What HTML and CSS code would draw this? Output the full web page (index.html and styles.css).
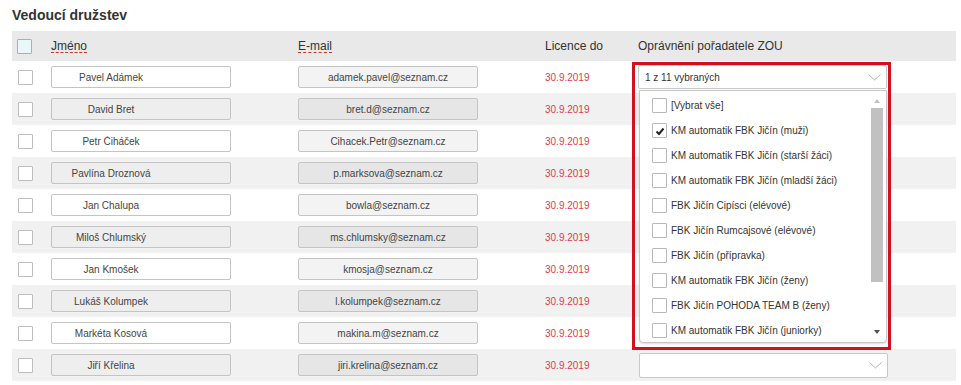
FILE: index.html
```html
<!DOCTYPE html>
<html lang="cs">
<head>
    <meta charset="UTF-8">
    <title>Vedoucí družstev</title>
    <link rel="stylesheet" href="styles.css">
</head>
<body>
    <h2 class="title">Vedoucí družstev</h2>

    <table class="leaders">
        <colgroup>
            <col class="c-check">
            <col class="c-name">
            <col class="c-mail">
            <col class="c-lic">
            <col class="c-zou">
        </colgroup>
        <thead>
            <tr>
                <th><span class="cb cb-head"></span></th>
                <th><abbr>Jméno</abbr></th>
                <th><abbr>E-mail</abbr></th>
                <th>Licence do</th>
                <th>Oprávnění pořadatele ZOU</th>
            </tr>
        </thead>
        <tbody>
            <tr>
                <td><span class="cb"></span></td>
                <td><input class="field field-name" value="Pavel Adámek" readonly></td>
                <td><input class="field field-mail" value="adamek.pavel@seznam.cz" readonly></td>
                <td class="lic">30.9.2019</td>
                <td>
                    <div class="zou-wrap">
                        <div class="ms-select">
                            <span>1 z 11 vybraných</span>
                            <svg class="chev" width="13" height="7" viewBox="0 0 13 7"><path d="M0.5 0.5 L6.5 6 L12.5 0.5" fill="none" stroke="#b5b5b5" stroke-width="1"/></svg>
                        </div>
                        <div class="ms-list">
                            <div class="ms-items">
                                <div class="ms-item"><span class="cb"></span>[Vybrat vše]</div>
                                <div class="ms-item"><span class="cb cb-on"><svg width="12" height="12" viewBox="0 0 12 12"><path d="M2.5 6.5 L5 9 L9.5 3.5" fill="none" stroke="#222" stroke-width="2"/></svg></span>KM automatik FBK Jičín (muži)</div>
                                <div class="ms-item"><span class="cb"></span>KM automatik FBK Jičín (starší žáci)</div>
                                <div class="ms-item"><span class="cb"></span>KM automatik FBK Jičín (mladší žáci)</div>
                                <div class="ms-item"><span class="cb"></span>FBK Jičín Cipísci (elévové)</div>
                                <div class="ms-item"><span class="cb"></span>FBK Jičín Rumcajsové (elévové)</div>
                                <div class="ms-item"><span class="cb"></span>FBK Jičín (přípravka)</div>
                                <div class="ms-item"><span class="cb"></span>KM automatik FBK Jičín (ženy)</div>
                                <div class="ms-item"><span class="cb"></span>FBK Jičín POHODA TEAM B (ženy)</div>
                                <div class="ms-item"><span class="cb"></span>KM automatik FBK Jičín (juniorky)</div>
                                <div class="ms-item"><span class="cb"></span>KM automatik FBK Jičín (dorostenci)</div>
                                <div class="ms-item"><span class="cb"></span>FBK Jičín B (muži)</div>
                            </div>
                            <div class="scrollbar">
                                <span class="sb-arrow sb-up"></span>
                                <span class="sb-thumb"></span>
                                <span class="sb-space"></span>
                                <span class="sb-arrow sb-down"></span>
                            </div>
                        </div>
                        <div class="highlight"></div>
                    </div>
                </td>
            </tr>
            <tr>
                <td><span class="cb"></span></td>
                <td><input class="field field-name" value="David Bret" readonly></td>
                <td><input class="field field-mail" value="bret.d@seznam.cz" readonly></td>
                <td class="lic">30.9.2019</td>
                <td></td>
            </tr>
            <tr>
                <td><span class="cb"></span></td>
                <td><input class="field field-name" value="Petr Čiháček" readonly></td>
                <td><input class="field field-mail" value="Cihacek.Petr@seznam.cz" readonly></td>
                <td class="lic">30.9.2019</td>
                <td></td>
            </tr>
            <tr>
                <td><span class="cb"></span></td>
                <td><input class="field field-name" value="Pavlína Droznová" readonly></td>
                <td><input class="field field-mail" value="p.marksova@seznam.cz" readonly></td>
                <td class="lic">30.9.2019</td>
                <td></td>
            </tr>
            <tr>
                <td><span class="cb"></span></td>
                <td><input class="field field-name" value="Jan Chalupa" readonly></td>
                <td><input class="field field-mail" value="bowla@seznam.cz" readonly></td>
                <td class="lic">30.9.2019</td>
                <td></td>
            </tr>
            <tr>
                <td><span class="cb"></span></td>
                <td><input class="field field-name" value="Miloš Chlumský" readonly></td>
                <td><input class="field field-mail" value="ms.chlumsky@seznam.cz" readonly></td>
                <td class="lic">30.9.2019</td>
                <td></td>
            </tr>
            <tr>
                <td><span class="cb"></span></td>
                <td><input class="field field-name" value="Jan Kmošek" readonly></td>
                <td><input class="field field-mail" value="kmosja@seznam.cz" readonly></td>
                <td class="lic">30.9.2019</td>
                <td></td>
            </tr>
            <tr>
                <td><span class="cb"></span></td>
                <td><input class="field field-name" value="Lukáš Kolumpek" readonly></td>
                <td><input class="field field-mail" value="l.kolumpek@seznam.cz" readonly></td>
                <td class="lic">30.9.2019</td>
                <td></td>
            </tr>
            <tr>
                <td><span class="cb"></span></td>
                <td><input class="field field-name" value="Markéta Kosová" readonly></td>
                <td><input class="field field-mail" value="makina.m@seznam.cz" readonly></td>
                <td class="lic">30.9.2019</td>
                <td></td>
            </tr>
            <tr>
                <td><span class="cb"></span></td>
                <td><input class="field field-name" value="Jiří Křelina" readonly></td>
                <td><input class="field field-mail" value="jiri.krelina@seznam.cz" readonly></td>
                <td class="lic">30.9.2019</td>
                <td>
                    <div class="ms-select ms-empty">
                        <span></span>
                        <svg class="chev" width="13" height="7" viewBox="0 0 13 7"><path d="M0.5 0.5 L6.5 6 L12.5 0.5" fill="none" stroke="#b5b5b5" stroke-width="1"/></svg>
                    </div>
                </td>
            </tr>
        </tbody>
    </table>
</body>
</html>
```

FILE: styles.css
```css
* {
    margin: 0;
    padding: 0;
    box-sizing: border-box;
}

body {
    font-family: 'Liberation Sans', Arial, sans-serif;
    color: #333;
    background: #fff;
    padding: 0 5px 0 12px;
}

.title {
    font-size: 14px;
    line-height: 17px;
    font-weight: bold;
    color: #333;
    margin: 7px 0 7px;
}

.leaders {
    width: 944px;
    border-collapse: collapse;
    table-layout: fixed;
}

.c-check { width: 33px; }
.c-name { width: 247px; }
.c-mail { width: 247px; }
.c-lic { width: 93px; }
.c-zou { width: 324px; }

th {
    background: #e9e9e9;
    height: 30px;
    font-size: 12px;
    font-weight: normal;
    text-align: left;
    padding: 0 6px;
    color: #333;
}

th abbr {
    display: inline-block;
    line-height: 12px;
    text-decoration: none;
    border-bottom: 1px dashed #c0392b;
}

td {
    height: 32px;
    padding: 0 6px;
    font-size: 10px;
    vertical-align: middle;
}

tbody tr:nth-child(even) {
    background: #f1f1f1;
}

.cb {
    display: inline-flex;
    align-items: center;
    justify-content: center;
    width: 15px;
    height: 15px;
    border: 1px solid #bdbdbd;
    border-radius: 1px;
    background: #fff;
    vertical-align: middle;
}

.cb-head {
    margin-left: -1px;
    background: #e9f7fa;
    border-color: #6ec6da;
}

.field {
    display: block;
    width: 180px;
    height: 22px;
    border: 1px solid #c4c4c4;
    border-radius: 2px;
    font-family: inherit;
    font-size: 10px;
    color: #444;
    text-align: center;
    outline: none;
}

.field-name {
    background: #fff;
    padding: 0 60px 0 0;
}

.field-mail {
    background: #f3f3f3;
    padding: 0;
}

tbody tr:nth-child(even) .field-name {
    background: #eeeeee;
}

tbody tr:nth-child(even) .field-mail {
    background: #e6e6e6;
}

.lic {
    color: #d9404a;
}

.zou-wrap {
    position: relative;
}

.ms-select {
    display: flex;
    align-items: center;
    justify-content: space-between;
    width: 249px;
    height: 24px;
    padding: 0 5px 0 6px;
    border: 1px solid #c8c8c8;
    border-radius: 2px;
    background: #fff;
    font-size: 10px;
    color: #333;
}

.ms-empty {
    height: 25px;
    margin-left: 1px;
}

.chev {
    display: block;
}

.ms-list {
    position: absolute;
    left: 1px;
    top: 25px;
    width: 248px;
    height: 253px;
    display: flex;
    background: #fff;
    border: 1px solid #c6c6c6;
    border-radius: 0 0 4px 4px;
    box-shadow: 0 1px 2px rgba(0,0,0,0.15);
    z-index: 2;
}

.ms-items {
    flex: 1;
    overflow: hidden;
    padding-top: 2px;
}

.ms-item {
    display: flex;
    align-items: center;
    height: 25px;
    padding-left: 12px;
    font-size: 10px;
    color: #333;
    white-space: nowrap;
}

.ms-item .cb {
    margin-right: 4px;
    border-color: #b8b8b8;
}

.cb-on {
    border-color: #9a9a9a;
}

.scrollbar {
    display: flex;
    flex-direction: column;
    align-items: center;
    width: 12px;
    margin-right: 3px;
    padding: 3px 0;
}

.sb-arrow {
    width: 12px;
    height: 14px;
    position: relative;
}

.sb-arrow::after {
    content: "";
    position: absolute;
    left: 3px;
    top: 5px;
    border-left: 3px solid transparent;
    border-right: 3px solid transparent;
}

.sb-up::after {
    border-bottom: 4px solid #c4c4c4;
}

.sb-down::after {
    border-top: 4px solid #505050;
}

.sb-thumb {
    width: 12px;
    height: 174px;
    background: #c1c1c1;
}

.sb-space {
    flex: 1;
}

.highlight {
    position: absolute;
    left: -6px;
    top: -3px;
    width: 259px;
    height: 288px;
    border: 3px solid #d0121c;
    pointer-events: none;
    z-index: 3;
}
```
